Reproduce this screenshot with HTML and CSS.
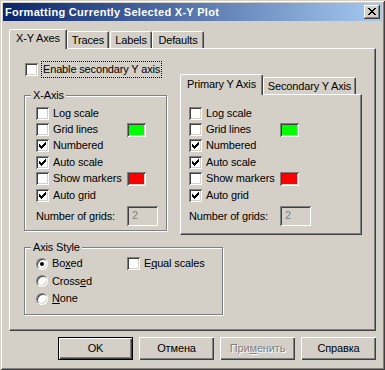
FILE: index.html
```html
<!DOCTYPE html>
<html lang="en">
<head>
  <meta charset="UTF-8">
  <title>Formatting Currently Selected X-Y Plot</title>
  <link rel="stylesheet" href="styles.css">
</head>
<body>
  <div class="window">
    <div class="titlebar">
      <span class="title">Formatting Currently Selected X-Y Plot</span>
      <span class="close">
        <svg width="16" height="14" viewBox="0 0 16 14" shape-rendering="crispEdges">
          <path fill="#000" d="M4 3h2v1H4z M10 3h2v1h-2z M5 4h2v1H5z M9 4h2v1H9z M6 5h4v1H6z M7 6h2v1H7z M6 7h4v1H6z M5 8h2v1H5z M9 8h2v1H9z M4 9h2v1H4z M10 9h2v1h-2z"/>
        </svg>
      </span>
    </div>

    <div class="body">
      <div class="tabs">
        <div class="tab active tab-xy">X-Y Axes</div>
        <div class="tab tab-traces">Traces</div>
        <div class="tab tab-labels">Labels</div>
        <div class="tab tab-defaults">Defaults</div>
      </div>

      <div class="panel">
        <div class="top-row">
          <div class="left-col">
            <div class="enable">
              <span class="check"></span>
              <span class="focus">Enable secondary Y axis</span>
            </div>

            <div class="group xaxis">
              <span class="legend">X-Axis</span>
              <div class="rows">
                <div class="row"><span class="check"></span><span class="label">Log scale</span></div>
                <div class="row"><span class="check"></span><span class="label">Grid lines</span><span class="swatch green"></span></div>
                <div class="row"><span class="check checked"></span><span class="label">Numbered</span></div>
                <div class="row"><span class="check checked"></span><span class="label">Auto scale</span></div>
                <div class="row"><span class="check"></span><span class="label">Show markers</span><span class="swatch red"></span></div>
                <div class="row"><span class="check checked"></span><span class="label">Auto grid</span></div>
              </div>
              <div class="num-row">
                <span class="num-label">Number of grids:</span>
                <span class="field">2</span>
              </div>
            </div>
          </div>

          <div class="right-col">
            <div class="tabs subtabs">
              <div class="tab active tab-primary">Primary Y Axis</div>
              <div class="tab tab-secondary">Secondary Y Axis</div>
            </div>
            <div class="subpanel">
              <div class="row"><span class="check"></span><span class="label">Log scale</span></div>
              <div class="row"><span class="check"></span><span class="label">Grid lines</span><span class="swatch green"></span></div>
              <div class="row"><span class="check checked"></span><span class="label">Numbered</span></div>
              <div class="row"><span class="check checked"></span><span class="label">Auto scale</span></div>
              <div class="row"><span class="check"></span><span class="label">Show markers</span><span class="swatch red"></span></div>
              <div class="row"><span class="check checked"></span><span class="label">Auto grid</span></div>
              <div class="num-row">
                <span class="num-label">Number of grids:</span>
                <span class="field">2</span>
              </div>
            </div>
          </div>
        </div>

        <div class="group axis-style">
          <span class="legend">Axis Style</span>
          <div class="style-grid">
            <div class="row"><span class="radio on"><span class="dot"></span></span><span class="rlabel">Bo<u>x</u>ed</span></div>
            <div class="row"><span class="check"></span><span class="rlabel">E<u>q</u>ual scales</span></div>
            <div class="row"><span class="radio"></span><span class="rlabel">Cross<u>e</u>d</span></div>
            <div></div>
            <div class="row"><span class="radio"></span><span class="rlabel"><u>N</u>one</span></div>
          </div>
        </div>
      </div>

      <div class="buttons">
        <span class="btn default">OK</span>
        <span class="btn">Отмена</span>
        <span class="btn disabled">При<u>м</u>енить</span>
        <span class="btn">Справка</span>
      </div>
    </div>
  </div>
</body>
</html>
```

FILE: styles.css
```css
body {
  margin: 0;
  font-family: "Liberation Sans", Arial, sans-serif;
  font-size: 11px;
  line-height: 13px;
  letter-spacing: -0.15px;
  color: #000;
  background: #d4d0c8;
}

.window {
  width: 385px;
  height: 370px;
  box-sizing: border-box;
  padding: 3px;
  background: #d4d0c8;
  box-shadow: inset 1px 1px #d4d0c8, inset -1px -1px #404040,
              inset 2px 2px #fff, inset -2px -2px #808080;
}

.titlebar {
  height: 18px;
  display: flex;
  align-items: center;
  justify-content: space-between;
  padding: 0 2px;
  background: linear-gradient(to right, #0a246a, #a6caf0);
  color: #fff;
  font-weight: bold;
}

.title {
  letter-spacing: 0.3px;
}

.close {
  display: block;
  width: 16px;
  height: 14px;
  background: #d4d0c8;
  box-shadow: inset -1px -1px #404040, inset 1px 1px #fff, inset -2px -2px #808080;
}

.close svg {
  display: block;
}

.body {
  padding: 8px 6px 0 6px;
}

/* tabs */
.tabs {
  display: flex;
  align-items: flex-end;
  height: 19px;
  position: relative;
  z-index: 1;
}

.tab {
  height: 17px;
  box-sizing: border-box;
  display: flex;
  align-items: center;
  justify-content: center;
  border-top: 1px solid #fff;
  border-left: 1px solid #fff;
  border-right: 1px solid #404040;
  border-radius: 2px 2px 0 0;
  box-shadow: inset -1px 0 #808080;
  background: #d4d0c8;
  white-space: nowrap;
}

.tab.active {
  height: 20px;
  margin-bottom: -1px;
  padding-bottom: 2px;
}

.tab-xy { width: 58px; }
.tab-traces { width: 42px; }
.tab-labels { width: 42px; margin-left: 1px; }
.tab-defaults { width: 52px; }

.panel {
  height: 283px;
  box-sizing: border-box;
  border: 1px solid;
  border-color: #fff #404040 #404040 #fff;
  box-shadow: inset -1px -1px #808080;
  padding: 12px 0 0 14px;
}

.top-row {
  display: flex;
  align-items: flex-start;
  gap: 13px;
}

.left-col {
  width: 143px;
}

.enable {
  display: flex;
  align-items: center;
  height: 17px;
}

.enable .check {
  margin-left: 1px;
}

.focus {
  margin-left: 3px;
  padding: 1px;
  border: 1px dotted #000;
  white-space: nowrap;
}

/* group boxes */
.group {
  border: 1px solid #808080;
  box-shadow: inset 1px 1px #fff, 1px 1px #fff;
  padding: 0 0 4px 11px;
}

.legend {
  display: table;
  margin: -7px 0 0 -5px;
  padding: 0 2px;
  background: #d4d0c8;
}

.xaxis {
  margin-top: 17px;
}

.rows {
  padding-top: 3px;
}

.row {
  display: flex;
  align-items: center;
  height: 16.4px;
}

.label {
  margin-left: 4px;
  width: 74px;
  white-space: nowrap;
}

.num-row {
  display: flex;
  align-items: center;
  height: 20px;
  margin-top: 3px;
}

.num-label {
  width: 91px;
  white-space: nowrap;
}

.field {
  width: 31px;
  height: 20px;
  box-sizing: border-box;
  padding: 3px 0 0 5px;
  color: #808080;
  background: #d4d0c8;
  box-shadow: inset 1px 1px #808080, inset -1px -1px #fff,
              inset 2px 2px #404040, inset -2px -2px #d4d0c8;
}

/* controls */
.check {
  flex: none;
  display: block;
  width: 13px;
  height: 13px;
  box-sizing: border-box;
  background: #fff;
  box-shadow: inset 1px 1px #808080, inset -1px -1px #fff,
              inset 2px 2px #404040, inset -2px -2px #d4d0c8;
}

.check.checked {
  background: #fff url("data:image/svg+xml,%3Csvg xmlns='http://www.w3.org/2000/svg' width='13' height='13' shape-rendering='crispEdges'%3E%3Cpath d='M9 3h1v1H9z M8 4h2v1H8z M3 5h1v1H3z M7 5h3v1H7z M3 6h2v1H3z M6 6h3v1H6z M3 7h5v1H3z M4 8h3v1H4z M5 9h1v1H5z'/%3E%3C/svg%3E") no-repeat;
}

.swatch {
  flex: none;
  width: 19px;
  height: 14px;
  box-shadow: inset 1px 1px #808080, inset -1px -1px #fff,
              inset 2px 2px #404040, inset -2px -2px #d4d0c8;
}

.swatch.green { background: #00ff00; }
.swatch.red { background: #ff0000; }

.radio {
  flex: none;
  width: 12px;
  height: 12px;
  box-sizing: border-box;
  display: flex;
  align-items: center;
  justify-content: center;
  border-radius: 50%;
  border: 1px solid;
  border-color: #808080 #fff #fff #808080;
  background: #fff;
  box-shadow: inset 1px 1px #404040, inset -1px -1px #d4d0c8;
}

.dot {
  width: 4px;
  height: 4px;
  border-radius: 50%;
  background: #000;
}

.rlabel {
  margin-left: 4px;
  white-space: nowrap;
}

.right-col {
  width: 182px;
  margin-top: 13px;
}

.subtabs {
  height: 20px;
}

.subtabs .tab.active {
  height: 21px;
}

.tab-primary { width: 83px; }
.tab-secondary { width: 93px; }

.subpanel {
  height: 141px;
  box-sizing: border-box;
  border: 1px solid;
  border-color: #fff #404040 #404040 #fff;
  box-shadow: inset -1px -1px #808080;
  padding: 10px 0 0 8px;
}

.axis-style {
  width: 199px;
  box-sizing: border-box;
  margin-top: 12px;
  padding-bottom: 6px;
}

.style-grid {
  display: grid;
  grid-template-columns: 91px auto;
  grid-auto-rows: 17.5px;
  padding-top: 1px;
}

.style-grid .row {
  height: auto;
}

/* buttons */
.buttons {
  display: flex;
  justify-content: flex-end;
  gap: 6px;
  margin-top: 6px;
}

.btn {
  width: 75px;
  height: 23px;
  box-sizing: border-box;
  display: flex;
  align-items: center;
  justify-content: center;
  box-shadow: inset 1px 1px #fff, inset -1px -1px #404040, inset -2px -2px #808080;
}

.btn.default {
  border: 1px solid #000;
}

.btn.disabled {
  color: #808080;
  text-shadow: 1px 1px #fff;
}
```
